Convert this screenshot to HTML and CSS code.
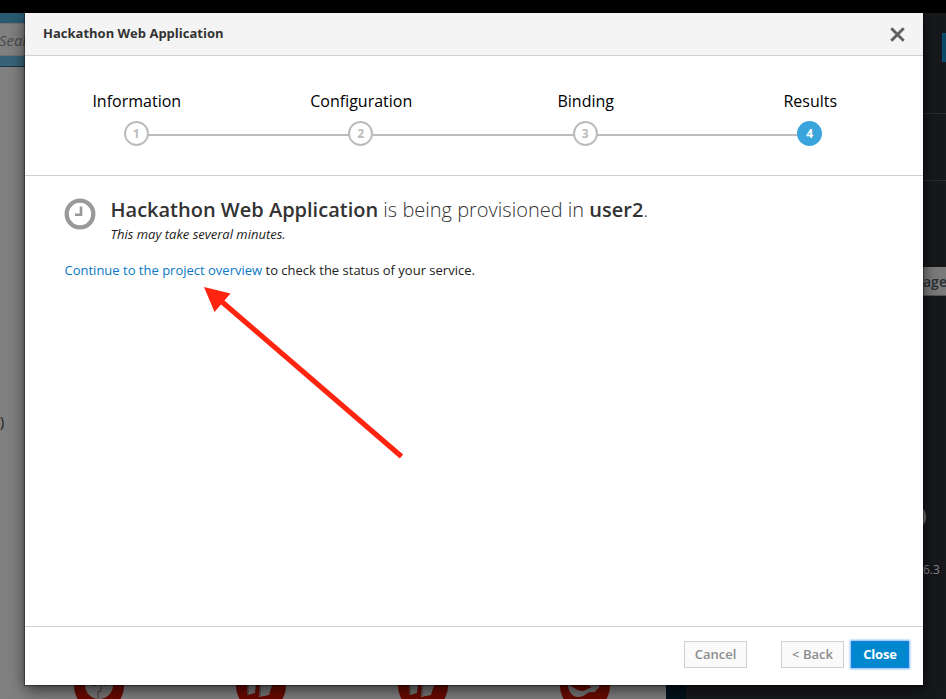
FILE: index.html
```html
<!DOCTYPE html>
<html lang="en">
<head>
<meta charset="utf-8">
<title>Hackathon Web Application</title>
<link rel="stylesheet" href="styles.css">
</head>
<body>
<div class="page">
  <div class="topbar"></div>
  <div class="backdrop">
    <main class="catalog">
      <div class="hero"><div class="search">Sear</div></div>
      <div class="count">)</div>
      <div class="tiles">
        <svg class="tile" viewBox="0 0 50 50"><circle cx="25" cy="25" r="25"/><circle class="white" cx="25" cy="24" r="14"/><path class="crack" d="M27 22v8l-3 1v6"/><path class="hole" d="M18 24l3-1 1 2zM28 23h4l-1 2z"/></svg>
        <svg class="tile" viewBox="0 0 50 50"><circle cx="25" cy="25" r="25"/><path class="white" d="M11 22l9-1-1 11-7 2zM25 22l12-1-4 13-10 2z"/><path class="crack" d="M12 22v12M24 22v13"/></svg>
        <svg class="tile" viewBox="0 0 50 50"><circle cx="25" cy="25" r="25"/><path class="white" d="M11 22l9-1-1 11-7 2zM25 22l12-1-4 13-10 2z"/><path class="crack" d="M12 22v12M24 22v13"/></svg>
        <svg class="tile" viewBox="0 0 50 50"><circle cx="25" cy="25" r="25"/><path class="white" d="M8 24c4 0 7 5 14 6 4 0 7-4 12-4 5 2 2 6-3 5-4 0-6 5-13 5-6 0-10-6-10-12z"/><path class="white" d="M25 22h14c2 7-4 8-8 4z"/></svg>
      </div>
    </main>
    <div class="gutter"></div>
    <aside class="sidebar">
      <div class="chip"></div>
      <div class="row first"></div>
      <div class="row second"></div>
      <div class="homepage">age</div>
      <div class="disc"></div>
      <div class="version">6.3</div>
    </aside>
  </div>
</div>

<section class="modal">
  <header class="modal-header">
    <h1 class="modal-title">Hackathon Web Application</h1>
    <svg class="close-icon" viewBox="0 0 14 14"><path d="M1.200 1.200l11.600 11.600M12.800 1.200l-11.600 11.600"/></svg>
  </header>
  <ol class="steps">
    <li class="step"><span class="label">Information</span><span class="dot">1</span></li>
    <li class="step"><span class="label">Configuration</span><span class="dot">2</span></li>
    <li class="step"><span class="label">Binding</span><span class="dot">3</span></li>
    <li class="step active"><span class="label">Results</span><span class="dot">4</span></li>
  </ol>
  <div class="content">
    <div class="status">
      <svg class="clock" viewBox="0 0 32 32"><circle cx="16" cy="16" r="13.300"/><path d="M17 8.500v8.300H11"/></svg>
      <div>
        <h2 class="headline"><strong class="name">Hackathon Web Application</strong> <span class="verb">is being provisioned in</span> <strong>user2</strong>.</h2>
        <p class="note">This may take several minutes.</p>
      </div>
    </div>
    <p class="next"><a class="link">Continue to the project overview</a> to check the status of your service.</p>
    <svg class="arrow" viewBox="0 0 200 172"><path class="shaft" d="M17 14L197.500 169.500"/><path class="head" d="M0 0l26.500 6.500L10.500 25z"/></svg>
  </div>
  <footer class="modal-footer">
    <button class="btn cancel">Cancel</button>
    <button class="btn back">&lt; Back</button>
    <button class="btn primary">Close</button>
  </footer>
</section>
</body>
</html>
```
FILE: styles.css
```css
* { box-sizing: border-box; }
body { margin: 0; overflow: hidden; font-family: "Open Sans", sans-serif; font-size: 13px; color: #333; }
h1, h2, p, ol { margin: 0; padding: 0; }

.page { display: flex; flex-direction: column; height: 699px; }
.topbar { height: 13px; background: #000; }
.backdrop { display: flex; flex: 1; min-height: 0; }
.catalog { display: flex; flex-direction: column; width: 666px; background: #808080; overflow: hidden; }
.hero { flex: none; height: 54px; padding-top: 10px; background: linear-gradient(#285a70, #3a6478); border-bottom: 1px solid #17374a; }
.search { height: 33px; background: #808080; border: 1px solid #737373; border-left: 0; line-height: 33px; font-size: 15px; font-style: italic; color: #4b4b4b; text-indent: -1px; }
.count { flex: none; height: 20px; margin-top: 345px; font-size: 14px; line-height: 20px; color: #1a1a1a; }
.tiles { display: flex; flex: none; gap: 112px; margin-top: 229px; padding-left: 74px; }
.tile { flex: none; width: 50px; height: 50px; fill: #6b0a00; }
.tile .white { fill: #777; }
.tile .crack { fill: none; stroke: #5c4c4a; stroke-width: 1.5; }
.tile .hole { fill: #111; }
.gutter { width: 20px; background: #00121b; }
.sidebar { flex: 1; padding-left: 237px; background: #17181c; overflow: hidden; }
.chip { width: 10px; height: 29px; margin: 20px 0 0 19px; background: #0a4866; border: 1px solid #064f7a; }
.row { height: 1px; background: #2c2d31; }
.first { margin-top: 51px; }
.second { margin-top: 66px; }
.homepage { height: 29px; margin-top: 86px; background: #7b7b7b; border-bottom: 1px solid #555; font-size: 14px; font-weight: 600; line-height: 29px; color: #292e34; }
.disc { width: 28px; height: 28px; margin: 207px 0 0 -25px; border-radius: 50%; background: #77787a; }
.version { margin-top: 30px; font-size: 12px; line-height: 18px; color: #88898b; }

.modal { position: absolute; left: 25px; top: 13px; width: 898px; height: 672px; display: flex; flex-direction: column; background: #fff; box-shadow: 0 0 1px 1px rgba(0,0,0,.35), 0 5px 15px rgba(0,0,0,.6); clip-path: inset(0 -30px -30px -30px); }
.modal-header { display: flex; align-items: center; justify-content: space-between; height: 43px; padding: 0 18px 0 18px; background: #f4f4f4; border-bottom: 1px solid #d0d0d0; }
.modal-title { margin-bottom: 2px; font-size: 13px; font-weight: 700; line-height: 20px; }
.close-icon { width: 15px; height: 15px; stroke: #606060; stroke-width: 2.7; }
.steps { display: grid; grid-template-columns: repeat(4, 1fr); height: 120px; margin: 0 1px 0 -1px; padding-top: 34px; list-style: none; }
.step { position: relative; display: flex; flex-direction: column; align-items: center; color: #000; }
.label { padding-left: 1px; font-size: 16px; line-height: 22px; }
.dot { display: flex; align-items: center; justify-content: center; width: 25px; height: 25px; margin-top: 9px; border: 2px solid #bbb; border-radius: 50%; background: #fff; font-size: 12px; font-weight: 700; color: #bbb; }
.step:not(:last-child)::after { content: ""; position: absolute; left: calc(50% + 12px); top: 44px; width: calc(100% - 24px); height: 2px; background: #bbb; }
.active .dot { background: #39a5dc; border-color: #39a5dc; color: #fff; }
.content { position: relative; flex: 1; margin-top: -1px; padding: 19px 40px 0; border-top: 1px solid #d0d0d0; color: #222; }
.status { display: flex; gap: 14.500px; margin-left: -1px; }
.clock { width: 32px; height: 32px; margin-top: 3px; fill: none; stroke: #999; stroke-width: 4.3; }
.clock path { stroke-width: 2.6; }
.headline { font-size: 20px; font-weight: 300; line-height: 30px; color: #333; white-space: nowrap; }
.headline strong { font-weight: 600; }
.note { font-style: italic; font-size: 13px; line-height: 18px; }
.next { margin: 17px 0 0 -0.5px; line-height: 20px; }
.link { color: #0a78c4; }
.arrow { position: absolute; left: 179px; top: 111px; width: 200px; height: 172px; }
.shaft { stroke: #ff2410; stroke-width: 5.2; }
.head { fill: #ff2410; }
.modal-footer { display: flex; height: 59px; padding: 14px 14px 0 0; justify-content: flex-end; border-top: 1px solid #d0d0d0; }
.btn { height: 27px; width: 63px; padding: 0 0 2px; border: 1px solid #d0d0d0; background: #fafafa; font: 600 13px/20px "Open Sans", sans-serif; color: #8b8d8f; }
.back { margin: 0 7px 0 34px; }
.primary { width: 58px; border-color: #1b7fe0; background: #0088ce; font-weight: 700; letter-spacing: -0.2px; color: #fff; box-shadow: 0 0 2px 1px #78b4f5; }
```
